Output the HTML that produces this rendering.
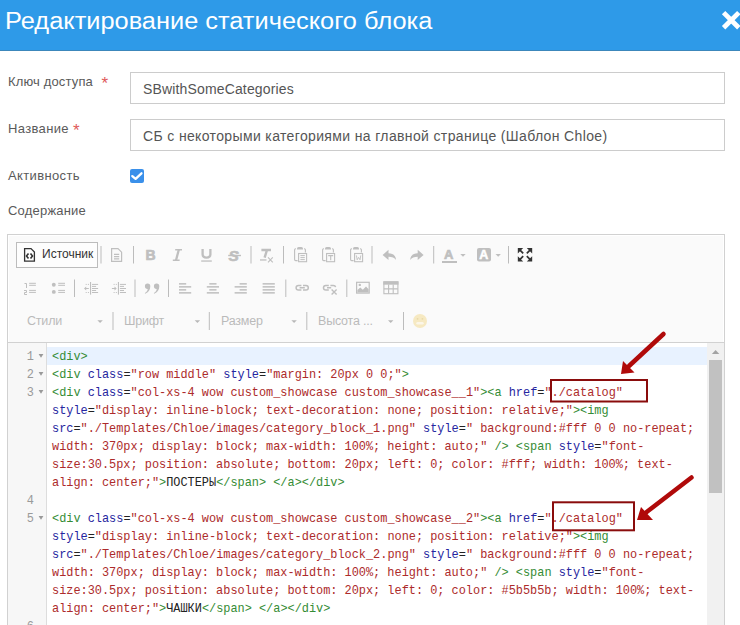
<!DOCTYPE html>
<html><head><meta charset="utf-8">
<style>
*{margin:0;padding:0;box-sizing:border-box}
html,body{width:740px;height:625px;overflow:hidden;background:#fff;font-family:"Liberation Sans",sans-serif;position:relative}
.abs{position:absolute;white-space:nowrap}
#hdr{position:absolute;left:0;top:0;width:740px;height:51px;background:#2e9ae8;border-bottom:1px solid #3c87bb}
#title{left:5px;top:6px;font-size:23px;line-height:30px;color:#fff;transform-origin:0 0;transform:scaleX(1.103)}
.lbl{left:8px;font-size:13px;line-height:16px;color:#5a5a5a}
.req{color:#e05a5a}
.inp{position:absolute;left:130px;width:595px;height:32px;border:1px solid #ccc;background:#fff}
.inpt{left:143px;font-size:14px;line-height:18px;color:#555}
#cb{position:absolute;left:130px;top:169px;width:14px;height:14px;border-radius:2px;background:#3a90ea}
#ed{position:absolute;left:7px;top:234px;width:718px;height:400px;border:1px solid #d1d1d1;background:#fafafa;box-shadow:inset 0 0 0 1px #fff}
#code{position:absolute;left:8px;top:342px;width:716px;height:290px;background:#fff;border-top:1px solid #d1d1d1}
#gut{position:absolute;left:8px;top:343px;width:39px;height:290px;background:#f7f7f7;border-right:1px solid #ddd}
.ln{position:absolute;left:52px;font-family:"Liberation Mono",monospace;font-size:11.9px;line-height:18px;white-space:pre;color:#222}
.num{position:absolute;font-family:"Liberation Mono",monospace;font-size:11.9px;line-height:18px;color:#9a9a9a;text-align:right;width:14px;left:20px}
.t{color:#358c35}.a{color:#2626a0}.s{color:#ad2b2b}
.tb{position:absolute;font-size:12.5px;line-height:16px;color:#bababa;letter-spacing:-0.2px}
svg.ic{position:absolute}
</style></head><body>

<div id="hdr"></div>
<div class="abs" id="title">Редактирование статического блока</div>
<svg class="ic" style="left:720px;top:9px" width="22" height="22" viewBox="0 0 22 22"><path d="M3.6 3.6L18.8 18.8M18.8 3.6L3.6 18.8" stroke="#fff" stroke-width="4.8"/></svg>

<div class="abs lbl" style="top:74px;letter-spacing:0.15px">Ключ доступа</div><div class="abs req" style="left:101.6px;top:75.5px;font-size:17px;line-height:16px">*</div>
<div class="inp" style="top:72px"></div>
<div class="abs inpt" style="top:80px;letter-spacing:0.15px">SBwithSomeCategories</div>

<div class="abs lbl" style="top:121px;letter-spacing:0.35px">Название</div><div class="abs req" style="left:73px;top:122.5px;font-size:17px;line-height:16px">*</div>
<div class="inp" style="top:119px"></div>
<div class="abs inpt" style="top:127px;letter-spacing:0.36px">СБ с некоторыми категориями на главной странице (Шаблон Chloe)</div>

<div class="abs lbl" style="top:168px;letter-spacing:0.36px">Активность</div>
<div id="cb"><svg width="14" height="14" viewBox="0 0 14 14" style="position:absolute;left:0;top:0"><path d="M2.3 7.1L5.6 9.9L11.5 4.3" stroke="#fff" stroke-width="2.3" fill="none" stroke-linecap="round" stroke-linejoin="round"/></svg></div>

<div class="abs lbl" style="top:203px;letter-spacing:0.2px">Содержание</div>
<div id="ed"></div>
<div style="position:absolute;left:16px;top:242px;width:82px;height:26px;border:1px solid #bcbcbc;background:#fdfdfd"></div>
<div class="abs" style="left:42px;top:247px;font-size:12px;line-height:14px;color:#333">Источник</div>
<svg class="ic" style="left:0;top:0" width="740" height="625" viewBox="0 0 740 625">
<path d="M24.6 248.6H31L34.4 252V261.2H24.6Z" fill="none" stroke="#333" stroke-width="1.3"/>
<path d="M28.5 253.4L26.5 256L28.5 258.6M30.5 253.4L32.5 256L30.5 258.6" fill="none" stroke="#333" stroke-width="1.6"/>
<g fill="#bcbcbc">
<rect x="100.5" y="246" width="1" height="17.5"/>
<rect x="133" y="246" width="1" height="17.5"/>
<rect x="250.5" y="246" width="1" height="17.5"/>
<rect x="283" y="246" width="1" height="17.5"/>
<rect x="371.5" y="246" width="1" height="17.5"/>
<rect x="433.2" y="246" width="1" height="17.5"/>
<rect x="508" y="246" width="1" height="17.5"/>
<rect x="74" y="279.5" width="1" height="17.5"/>
<rect x="134.5" y="279.5" width="1" height="17.5"/>
<rect x="168" y="279.5" width="1" height="17.5"/>
<rect x="285.3" y="279.5" width="1" height="17.5"/>
<rect x="346.3" y="279.5" width="1" height="17.5"/>
<rect x="112.5" y="312" width="1" height="18"/>
<rect x="208.8" y="312" width="1" height="18"/>
<rect x="306.3" y="312" width="1" height="18"/>
<rect x="403" y="312" width="1" height="18"/>
</g>
<g fill="none" stroke="#bfbfbf" stroke-width="1.2"><path d="M111.6 248.6H118L121.6 252.2V261.4H111.6Z"/><path d="M114 254.4H119.2M114 256.6H119.2M114 258.8H119.2"/></g>
<text x="145.5" y="260.4" font-family="Liberation Sans" font-weight="bold" font-size="14" fill="#bfbfbf" stroke="#bfbfbf" stroke-width="0.7">B</text>
<path d="M175.2 249.8H182M172.8 260.2H179.6" stroke="#bfbfbf" stroke-width="1.6"/><path d="M178.8 249.8L176 260.2" stroke="#bfbfbf" stroke-width="2.3"/>
<path d="M202.6 249V254.3Q202.6 257.6 206.5 257.6Q210.4 257.6 210.4 254.3V249" fill="none" stroke="#bfbfbf" stroke-width="2.3"/>
<rect x="201.2" y="260.4" width="10.6" height="1.3" fill="#bfbfbf"/>
<text x="228.6" y="260.6" font-family="Liberation Sans" font-style="italic" font-weight="bold" font-size="15.5" fill="#bfbfbf" stroke="#bfbfbf" stroke-width="0.6">S</text>
<rect x="228.2" y="254.8" width="12.8" height="1.4" fill="#bfbfbf"/>
<path d="M261.4 250H271M267 250L264.6 257.6" fill="none" stroke="#bfbfbf" stroke-width="2.4"/>
<rect x="260" y="259.3" width="6.5" height="1.3" fill="#bfbfbf"/>
<path d="M268 257.3L272.8 262.3M272.8 257.3L268 262.3" fill="none" stroke="#bfbfbf" stroke-width="1.1"/>
<g fill="none" stroke="#bfbfbf" stroke-width="1.1"><path d="M296 248.8H295.6Q294.6 248.8 294.6 249.8V259.6Q294.6 260.6 295.6 260.6H297.6"/><path d="M304 248.8H304.4Q305.4 248.8 305.4 249.8V252.4"/><rect x="298.6" y="253.5" width="8" height="8.2"/></g><path d="M297 249.6V248.6Q297 247 298.6 247H301.4Q303 247 303 248.6V249.6Z" fill="#bfbfbf"/><path d="M300.4 255.6H304.8M300.4 257.6H304.8M300.4 259.6H304.8" stroke="#bfbfbf" stroke-width="1"/>
<g fill="none" stroke="#bfbfbf" stroke-width="1.1"><path d="M324 248.8H323.6Q322.6 248.8 322.6 249.8V259.6Q322.6 260.6 323.6 260.6H325.6"/><path d="M332 248.8H332.4Q333.4 248.8 333.4 249.8V252.4"/><rect x="326.6" y="253.5" width="8" height="8.2"/></g><path d="M325 249.6V248.6Q325 247 326.6 247H329.4Q331 247 331 248.6V249.6Z" fill="#bfbfbf"/><path d="M328.2 255.6H333.2M330.7 255.6V260.2" stroke="#bfbfbf" stroke-width="1.1"/>
<g fill="none" stroke="#bfbfbf" stroke-width="1.1"><path d="M352 248.8H351.6Q350.6 248.8 350.6 249.8V259.6Q350.6 260.6 351.6 260.6H353.6"/><path d="M360 248.8H360.4Q361.4 248.8 361.4 249.8V252.4"/><rect x="354.6" y="253.5" width="8" height="8.2"/></g><path d="M353 249.6V248.6Q353 247 354.6 247H357.4Q359 247 359 248.6V249.6Z" fill="#bfbfbf"/><path d="M356.4 255.4L357.2 259.8L358.6 257.4L360 259.8L360.8 255.4" stroke="#bfbfbf" stroke-width="0.9" fill="none"/>
<path d="M382.6 255L388.5 249.8V253.2C392.8 253.4 396 255.4 396 260C394.5 257.6 392 256.8 388.5 256.8V260Z" fill="#bfbfbf"/>
<path d="M423.6 255L417.7 249.8V253.2C413.4 253.4 410.2 255.4 410.2 260C411.7 257.6 414.2 256.8 417.7 256.8V260Z" fill="#bfbfbf"/>
<text x="444" y="259" font-family="Liberation Sans" font-weight="bold" font-size="13" fill="#bfbfbf" stroke="#bfbfbf" stroke-width="0.7">A</text>
<rect x="442" y="261" width="15" height="2" fill="#bfbfbf"/>
<path d="M460.3 254H465.7L463 256.7Z" fill="#bfbfbf"/>
<rect x="477" y="248" width="14" height="13.6" rx="2" fill="#bfbfbf"/>
<text x="479.2" y="259.4" font-family="Liberation Sans" font-weight="bold" font-size="12.5" fill="#fff" stroke="#fff" stroke-width="0.5">A</text>
<path d="M495.5 254H500.9L498.2 256.7Z" fill="#bfbfbf"/>
<g fill="none" stroke="#333" stroke-width="1.7"><path d="M519 249.2L523.2 253.4M531 249.2L526.8 253.4M519 260.4L523.2 256.2M531 260.4L526.8 256.2"/></g>
<g fill="#333"><path d="M517.8 248H523.2L517.8 253.4Z"/><path d="M532.2 248H526.8L532.2 253.4Z"/><path d="M517.8 261.6H523.2L517.8 256.2Z"/><path d="M532.2 261.6H526.8L532.2 256.2Z"/></g>
<g fill="#bfbfbf">
<rect x="29.1" y="282.8" width="6.8" height="1"/>
<rect x="58.2" y="282.8" width="6.8" height="1"/>
<rect x="29.1" y="284.8" width="6.8" height="1"/>
<rect x="58.2" y="284.8" width="6.8" height="1"/>
<rect x="29.1" y="289.9" width="6.8" height="1"/>
<rect x="58.2" y="289.9" width="6.8" height="1"/>
<rect x="29.1" y="291.9" width="6.8" height="1"/>
<rect x="58.2" y="291.9" width="6.8" height="1"/>
<circle cx="53.8" cy="284.8" r="1.95"/><circle cx="53.8" cy="291.9" r="1.95"/>
</g>
<path d="M24.5 283.5H26.5V288M24 290.5H26.5V292.5H24.5V294.5H27" fill="none" stroke="#bfbfbf" stroke-width="1"/>
<g fill="#bfbfbf"><rect x="90.0" y="282" width="1.1" height="12.6"/><rect x="92.0" y="283.9" width="6.1" height="1"/><rect x="92.0" y="285.9" width="4.1" height="1"/><rect x="92.0" y="288.0" width="6.1" height="1"/><rect x="92.0" y="290.0" width="4.1" height="1"/><rect x="92.0" y="292.0" width="6.1" height="1"/><rect x="85.7" y="283.9" width="1" height="1"/><rect x="87.9" y="283.9" width="1" height="1"/><rect x="85.7" y="292.0" width="1" height="1"/><rect x="87.9" y="292.0" width="1" height="1"/><path d="M84.0 288.5L86.2 286.5V288H88.8V289H86.2V290.5Z"/></g>
<g fill="#bfbfbf"><rect x="117.9" y="282" width="1.1" height="12.6"/><rect x="119.9" y="283.9" width="6.1" height="1"/><rect x="119.9" y="285.9" width="4.1" height="1"/><rect x="119.9" y="288.0" width="6.1" height="1"/><rect x="119.9" y="290.0" width="4.1" height="1"/><rect x="119.9" y="292.0" width="6.1" height="1"/><rect x="113.60000000000001" y="283.9" width="1" height="1"/><rect x="115.80000000000001" y="283.9" width="1" height="1"/><rect x="113.60000000000001" y="292.0" width="1" height="1"/><rect x="115.80000000000001" y="292.0" width="1" height="1"/><path d="M116.7 288.5L114.5 286.5V288H111.9V289H114.5V290.5Z"/></g>
<path d="M150.29999999999998 286.2C150.29999999999998 289.59999999999997 148.6 292.5 145.2 293.8L144.79999999999998 293.09999999999997C146.7 292.0 147.5 290.5 147.7 288.9A2.7 2.7 0 1 1 150.29999999999998 286.2Z" fill="#bfbfbf"/>
<path d="M159.29999999999998 286.2C159.29999999999998 289.59999999999997 157.6 292.5 154.2 293.8L153.79999999999998 293.09999999999997C155.7 292.0 156.5 290.5 156.7 288.9A2.7 2.7 0 1 1 159.29999999999998 286.2Z" fill="#bfbfbf"/>
<g fill="#bfbfbf"><rect x="179" y="283.1" width="7.2" height="1.5"/><rect x="179" y="286.1" width="12.2" height="1.5"/><rect x="179" y="289.1" width="7.2" height="1.5"/><rect x="179" y="292.1" width="12.2" height="1.5"/></g><g fill="#bfbfbf"><rect x="209.3" y="283.1" width="7.2" height="1.5"/><rect x="206.8" y="286.1" width="12.2" height="1.5"/><rect x="209.3" y="289.1" width="7.2" height="1.5"/><rect x="206.8" y="292.1" width="12.2" height="1.5"/></g><g fill="#bfbfbf"><rect x="239.6" y="283.1" width="7.2" height="1.5"/><rect x="234.6" y="286.1" width="12.2" height="1.5"/><rect x="239.6" y="289.1" width="7.2" height="1.5"/><rect x="234.6" y="292.1" width="12.2" height="1.5"/></g><g fill="#bfbfbf"><rect x="262.6" y="283.1" width="12.2" height="1.5"/><rect x="262.6" y="286.1" width="12.2" height="1.5"/><rect x="262.6" y="289.1" width="12.2" height="1.5"/><rect x="262.6" y="292.1" width="12.2" height="1.5"/></g>
<g fill="none" stroke="#bfbfbf" stroke-width="1.5"><path d="M301.4 285.4H298.4A2.3 2.3 0 0 0 298.4 290H301.4M303 285.4H306A2.3 2.3 0 0 1 306 290H303M299.6 287.7H304.8"/><path d="M328.8 285.4H325.8A2.3 2.3 0 0 0 325.8 290H328.8M330.4 285.4H333.4A2.3 2.3 0 0 1 335.6 287.2M327 287.7H331.2"/></g>
<path d="M331.6 289.4L336.6 294.4M336.6 289.4L331.6 294.4" stroke="#bfbfbf" stroke-width="1.4"/>
<rect x="356.6" y="282.3" width="12.6" height="10.8" fill="none" stroke="#bfbfbf" stroke-width="1.2"/>
<path d="M357.4 292.6V290L360.3 287.6L362.8 289.8L366 286.6L368.6 289.2V292.6Z" fill="#bfbfbf"/>
<circle cx="359.8" cy="284.9" r="1.2" fill="#bfbfbf"/>
<g fill="none" stroke="#bfbfbf" stroke-width="1.1"><rect x="383.9" y="281.9" width="14" height="11.8"/><path d="M383.9 288.9H397.9M388.6 284.5V293.7M393.2 284.5V293.7"/></g>
<rect x="383.3" y="281.3" width="15.2" height="3.4" fill="#bfbfbf"/>
<path d="M97.4 320.2H102.80000000000001L100.10000000000001 323Z" fill="#b8b8b8"/>
<path d="M194.7 320.2H200.1L197.39999999999998 323Z" fill="#b8b8b8"/>
<path d="M291.4 320.2H296.79999999999995L294.09999999999997 323Z" fill="#b8b8b8"/>
<path d="M388 320.2H393.4L390.7 323Z" fill="#b8b8b8"/>
</svg>
<div class="tb" style="left:27px;top:313px">Стили</div>
<div class="tb" style="left:124px;top:313px">Шрифт</div>
<div class="tb" style="left:221px;top:313px">Размер</div>
<div class="tb" style="left:318px;top:313px">Высота ...</div>
<svg class="ic" style="left:412px;top:313px" width="16" height="16" viewBox="0 0 16 16">
<circle cx="8" cy="8" r="7" fill="#f6e9c2"/>
<rect x="4.3" y="9" width="7.4" height="2.6" rx="1.3" fill="#fbf6e8"/>
<circle cx="5.6" cy="5.8" r="0.9" fill="#e8d9a8"/><circle cx="10.4" cy="5.8" r="0.9" fill="#e8d9a8"/>
</svg>
<div id="code"></div>
<div id="gut"></div>
<div style="position:absolute;left:47px;top:347px;width:660px;height:18px;background:#e8f2ff"></div>
<div class="ln" style="top:348px"><span class="t">&lt;div&gt;</span></div>
<div class="ln" style="top:366px"><span class="t">&lt;div</span> <span class="a">class</span>=<span class="s">"row middle"</span> <span class="a">style</span>=<span class="s">"margin: 20px 0 0;"</span><span class="t">&gt;</span></div>
<div class="ln" style="top:384px"><span class="t">&lt;div</span> <span class="a">class</span>=<span class="s">"col-xs-4 wow custom_showcase custom_showcase__1"</span><span class="t">&gt;&lt;a</span> <span class="a">href</span>=<span class="s">"./catalog"</span></div>
<div class="ln" style="top:402px"><span class="a">style</span>=<span class="s">"display: inline-block; text-decoration: none; position: relative;"</span><span class="t">&gt;&lt;img</span></div>
<div class="ln" style="top:420px"><span class="a">src</span>=<span class="s">"./Templates/Chloe/images/category_block_1.png"</span> <span class="a">style</span>=<span class="s">" background:#fff 0 0 no-repeat;</span></div>
<div class="ln" style="top:438px"><span class="s">width: 370px; display: block; max-width: 100%; height: auto;"</span> <span class="t">/&gt;</span> <span class="t">&lt;span</span> <span class="a">style</span>=<span class="s">"font-</span></div>
<div class="ln" style="top:456px"><span class="s">size:30.5px; position: absolute; bottom: 20px; left: 0; color: #fff; width: 100%; text-</span></div>
<div class="ln" style="top:474px"><span class="s">align: center;"</span><span class="t">&gt;</span>ПОСТЕРЫ<span class="t">&lt;/span&gt;</span> <span class="t">&lt;/a&gt;&lt;/div&gt;</span></div>
<div class="ln" style="top:492px"></div>
<div class="ln" style="top:510px"><span class="t">&lt;div</span> <span class="a">class</span>=<span class="s">"col-xs-4 wow custom_showcase custom_showcase__2"</span><span class="t">&gt;&lt;a</span> <span class="a">href</span>=<span class="s">"./catalog"</span></div>
<div class="ln" style="top:528px"><span class="a">style</span>=<span class="s">"display: inline-block; text-decoration: none; position: relative;"</span><span class="t">&gt;&lt;img</span></div>
<div class="ln" style="top:546px"><span class="a">src</span>=<span class="s">"./Templates/Chloe/images/category_block_2.png"</span> <span class="a">style</span>=<span class="s">" background:#fff 0 0 no-repeat;</span></div>
<div class="ln" style="top:564px"><span class="s">width: 370px; display: block; max-width: 100%; height: auto;"</span> <span class="t">/&gt;</span> <span class="t">&lt;span</span> <span class="a">style</span>=<span class="s">"font-</span></div>
<div class="ln" style="top:582px"><span class="s">size:30.5px; position: absolute; bottom: 20px; left: 0; color: #5b5b5b; width: 100%; text-</span></div>
<div class="ln" style="top:600px"><span class="s">align: center;"</span><span class="t">&gt;</span>ЧАШКИ<span class="t">&lt;/span&gt;</span> <span class="t">&lt;/a&gt;&lt;/div&gt;</span></div>
<div class="ln" style="top:618px"></div>
<div class="num" style="top:348px">1</div>
<div class="num" style="top:366px">2</div>
<div class="num" style="top:384px">3</div>
<div class="num" style="top:492px">4</div>
<div class="num" style="top:510px">5</div>
<div class="num" style="top:618px">6</div>
<div style="position:absolute;left:707px;top:343px;width:17px;height:290px;background:#f1f1f1"></div>
<div style="position:absolute;left:709px;top:360px;width:13px;height:133px;background:#c1c1c1"></div>
<svg class="ic" style="left:0;top:0" width="740" height="625" viewBox="0 0 740 625">
<path d="M38.6 353.9H43.4L41 357.7Z" fill="#999"/>
<path d="M38.6 371.9H43.4L41 375.7Z" fill="#999"/>
<path d="M38.6 389.9H43.4L41 393.7Z" fill="#999"/>
<path d="M38.6 515.9000000000001H43.4L41 519.7Z" fill="#999"/>
<path d="M711.9 354H719.3L715.6 350Z" fill="#a3a3a3"/>
<g fill="none" stroke="#8a0c0c" stroke-width="2"><rect x="551" y="380" width="96" height="21.5"/><rect x="553" y="502.3" width="81" height="28"/></g>
<g stroke="#b00a0a" stroke-width="4.5" stroke-linecap="round"><path d="M663.5 334L629 366"/><path d="M691.5 477.5L646 512.5"/></g>
<g fill="#b00a0a"><path d="M621 374L623 361L634.5 372.5Z"/><path d="M637 520L641 507L653 520Z"/></g>
</svg>

</body></html>
